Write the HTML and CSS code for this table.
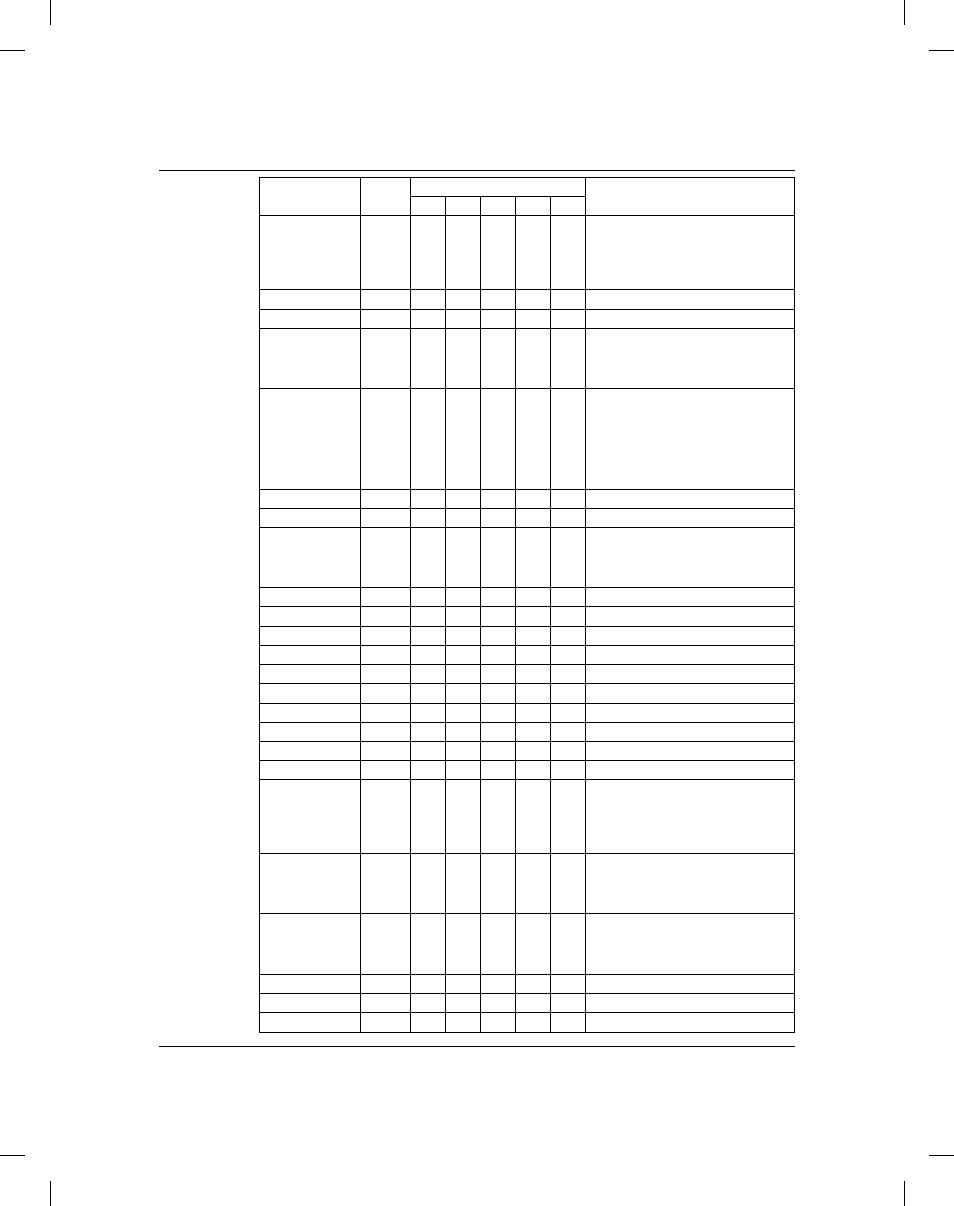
FILE: index.html
```html
<!DOCTYPE html>
<html lang="en">
<head>
<meta charset="utf-8">
<title>Table page</title>
<link rel="stylesheet" href="styles.css">
</head>
<body>
<div class="sheet">
  <span class="mark v tl"></span><span class="mark h tl-h"></span>
  <span class="mark v tr"></span><span class="mark h tr-h"></span>
  <span class="mark h bl-h"></span><span class="mark v bl"></span>
  <span class="mark h br-h"></span><span class="mark v br"></span>

  <div class="page">
    <div class="rule"></div>
    <div class="grid" role="table">
      <div class="c hd-a"></div>
      <div class="c hd-b"></div>
      <div class="c hd-group"></div>
      <div class="c hd-last"></div>
      <div class="c"></div><div class="c"></div><div class="c"></div><div class="c"></div><div class="c"></div>

      <div class="row"><div class="c"></div><div class="c"></div><div class="c"></div><div class="c"></div><div class="c"></div><div class="c"></div><div class="c"></div><div class="c"></div></div>
      <div class="row"><div class="c"></div><div class="c"></div><div class="c"></div><div class="c"></div><div class="c"></div><div class="c"></div><div class="c"></div><div class="c"></div></div>
      <div class="row"><div class="c"></div><div class="c"></div><div class="c"></div><div class="c"></div><div class="c"></div><div class="c"></div><div class="c"></div><div class="c"></div></div>
      <div class="row"><div class="c"></div><div class="c"></div><div class="c"></div><div class="c"></div><div class="c"></div><div class="c"></div><div class="c"></div><div class="c"></div></div>
      <div class="row"><div class="c"></div><div class="c"></div><div class="c"></div><div class="c"></div><div class="c"></div><div class="c"></div><div class="c"></div><div class="c"></div></div>
      <div class="row"><div class="c"></div><div class="c"></div><div class="c"></div><div class="c"></div><div class="c"></div><div class="c"></div><div class="c"></div><div class="c"></div></div>
      <div class="row"><div class="c"></div><div class="c"></div><div class="c"></div><div class="c"></div><div class="c"></div><div class="c"></div><div class="c"></div><div class="c"></div></div>
      <div class="row"><div class="c"></div><div class="c"></div><div class="c"></div><div class="c"></div><div class="c"></div><div class="c"></div><div class="c"></div><div class="c"></div></div>
      <div class="row"><div class="c"></div><div class="c"></div><div class="c"></div><div class="c"></div><div class="c"></div><div class="c"></div><div class="c"></div><div class="c"></div></div>
      <div class="row"><div class="c"></div><div class="c"></div><div class="c"></div><div class="c"></div><div class="c"></div><div class="c"></div><div class="c"></div><div class="c"></div></div>
      <div class="row"><div class="c"></div><div class="c"></div><div class="c"></div><div class="c"></div><div class="c"></div><div class="c"></div><div class="c"></div><div class="c"></div></div>
      <div class="row"><div class="c"></div><div class="c"></div><div class="c"></div><div class="c"></div><div class="c"></div><div class="c"></div><div class="c"></div><div class="c"></div></div>
      <div class="row"><div class="c"></div><div class="c"></div><div class="c"></div><div class="c"></div><div class="c"></div><div class="c"></div><div class="c"></div><div class="c"></div></div>
      <div class="row"><div class="c"></div><div class="c"></div><div class="c"></div><div class="c"></div><div class="c"></div><div class="c"></div><div class="c"></div><div class="c"></div></div>
      <div class="row"><div class="c"></div><div class="c"></div><div class="c"></div><div class="c"></div><div class="c"></div><div class="c"></div><div class="c"></div><div class="c"></div></div>
      <div class="row"><div class="c"></div><div class="c"></div><div class="c"></div><div class="c"></div><div class="c"></div><div class="c"></div><div class="c"></div><div class="c"></div></div>
      <div class="row"><div class="c"></div><div class="c"></div><div class="c"></div><div class="c"></div><div class="c"></div><div class="c"></div><div class="c"></div><div class="c"></div></div>
      <div class="row"><div class="c"></div><div class="c"></div><div class="c"></div><div class="c"></div><div class="c"></div><div class="c"></div><div class="c"></div><div class="c"></div></div>
      <div class="row"><div class="c"></div><div class="c"></div><div class="c"></div><div class="c"></div><div class="c"></div><div class="c"></div><div class="c"></div><div class="c"></div></div>
      <div class="row"><div class="c"></div><div class="c"></div><div class="c"></div><div class="c"></div><div class="c"></div><div class="c"></div><div class="c"></div><div class="c"></div></div>
      <div class="row"><div class="c"></div><div class="c"></div><div class="c"></div><div class="c"></div><div class="c"></div><div class="c"></div><div class="c"></div><div class="c"></div></div>
      <div class="row"><div class="c"></div><div class="c"></div><div class="c"></div><div class="c"></div><div class="c"></div><div class="c"></div><div class="c"></div><div class="c"></div></div>
      <div class="row"><div class="c"></div><div class="c"></div><div class="c"></div><div class="c"></div><div class="c"></div><div class="c"></div><div class="c"></div><div class="c"></div></div>
      <div class="row"><div class="c"></div><div class="c"></div><div class="c"></div><div class="c"></div><div class="c"></div><div class="c"></div><div class="c"></div><div class="c"></div></div>
    </div>
    <div class="rule rule-bottom"></div>
  </div>
</div>
</body>
</html>
```

FILE: styles.css
```css
html, body {
  margin: 0;
  padding: 0;
  background: #fff;
  font-family: "Liberation Serif", "Times New Roman", serif;
}

.sheet {
  position: relative;
  width: 954px;
  height: 1206px;
  overflow: hidden;
}

/* crop marks */
.mark {
  position: absolute;
  background: #000;
  display: block;
}
.mark.v { width: 1px; height: 25px; }
.mark.h { width: 25px; height: 1px; }
.tl { left: 50px; top: 0; }
.tl-h { left: 0; top: 50px; }
.tr { left: 904px; top: 0; }
.tr-h { left: 929px; top: 50px; }
.bl-h { left: 0; top: 1155px; }
.bl { left: 50px; top: 1181px; }
.br-h { left: 929px; top: 1155px; }
.br { left: 904px; top: 1181px; }

.page {
  padding-top: 170px;
  padding-left: 159px;
  width: 636px;
}

.rule {
  height: 1px;
  background: #000;
}

.rule-bottom {
  margin-top: 13px;
}

.grid {
  margin-top: 6px;
  margin-left: 100px;
  display: grid;
  grid-template-columns: 100px 49px 34px 34px 34px 34px 34px 208px;
  grid-template-rows:
    18px 18px
    73px 19px 18px 59px 100px 18px 18px 59px
    18px 19px 18px 18px 18px 19px 18px 18px
    18px 18px 73px 59px 60px 18px 18px 19px;
  gap: 1px;
  background: #000;
  border: 1px solid #000;
  width: max-content;
}

.row {
  display: contents;
}

.c {
  background: #fff;
}

.hd-a { grid-column: 1; grid-row: 1 / span 2; }
.hd-b { grid-column: 2; grid-row: 1 / span 2; }
.hd-group { grid-column: 3 / span 5; grid-row: 1; }
.hd-last { grid-column: 8; grid-row: 1 / span 2; }
```
